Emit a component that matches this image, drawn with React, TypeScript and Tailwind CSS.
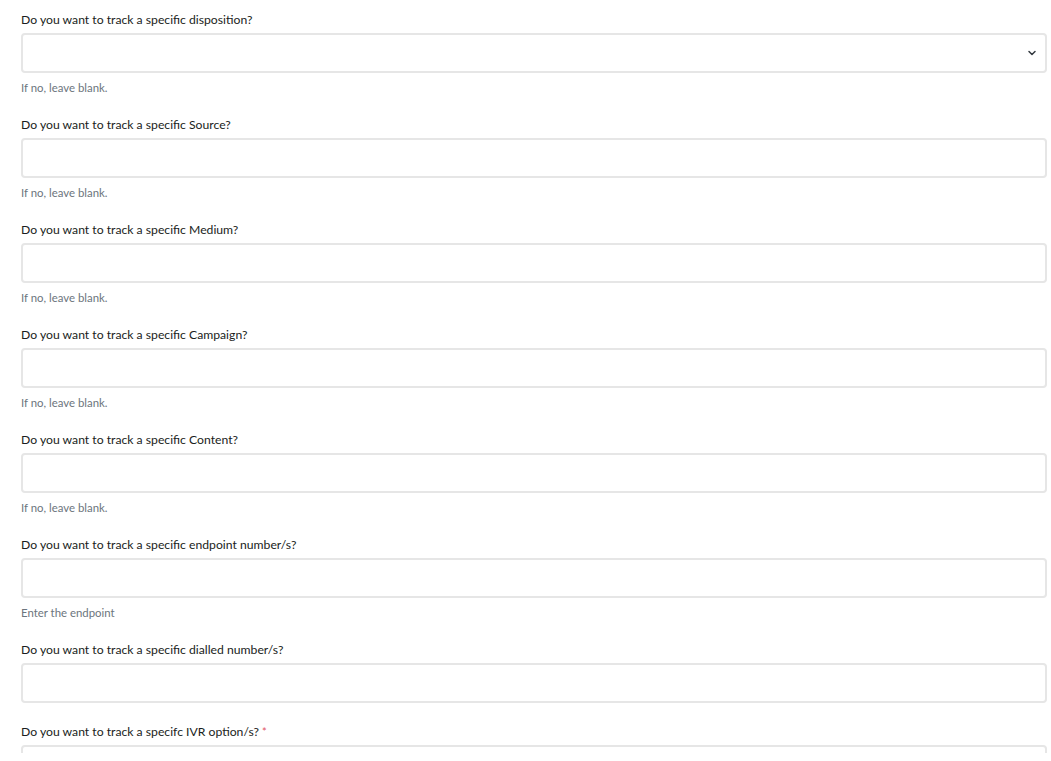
import React from "react";

type Field = { label: string; help?: string; select?: boolean; required?: boolean };

const fields: Field[] = [
  { label: "Do you want to track a specific disposition?", help: "If no, leave blank.", select: true },
  { label: "Do you want to track a specific Source?", help: "If no, leave blank." },
  { label: "Do you want to track a specific Medium?", help: "If no, leave blank." },
  { label: "Do you want to track a specific Campaign?", help: "If no, leave blank." },
  { label: "Do you want to track a specific Content?", help: "If no, leave blank." },
  { label: "Do you want to track a specific endpoint number/s?", help: "Enter the endpoint" },
  { label: "Do you want to track a specific dialled number/s?" },
  { label: "Do you want to track a specifc IVR option/s?", required: true },
];

export default function App() {
  return (
    <div className="h-[761px] w-[1051px] bg-white" style={{ fontFamily: "Lato, 'Liberation Sans', sans-serif" }}>
      <div className="h-[753px] overflow-hidden pl-[21px] pr-[4px] pt-[12px]">
        {fields.map((f, i) => (
          <div key={i} className={f.help ? "mb-[22px]" : "mb-[21px]"}>
            <div className="text-[12.2px] leading-[16px] text-[#1a1d21]">
              {f.label}
              {f.required && <span className="ml-[3px] text-[11px] text-[#e05260]">*</span>}
            </div>
            <div className="relative mt-[5px] h-[40px] rounded-[4px] border-2 border-[#e6e6e6] bg-white">
              {f.select && (
                <svg className="absolute right-[8px] top-[13px]" width="10" height="10" viewBox="0 0 10 10" fill="none">
                  <path d="M2 3.5 L5 6.5 L8 3.5" stroke="#343a40" strokeWidth="1.5" strokeLinecap="round" strokeLinejoin="round" />
                </svg>
              )}
            </div>
            {f.help && (
              <div className="mt-[8px] text-[11.4px] leading-[14px] text-[#6c757d]">{f.help}</div>
            )}
          </div>
        ))}
      </div>
    </div>
  );
}
